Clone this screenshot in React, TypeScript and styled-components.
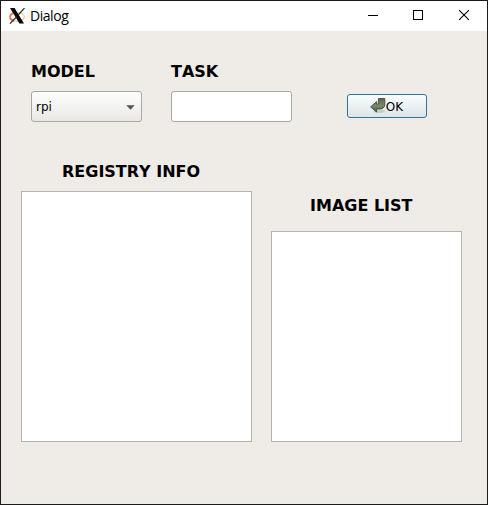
import React from "react";
import styled, { createGlobalStyle } from "styled-components";

const GlobalStyle = createGlobalStyle`
  *, *::before, *::after { box-sizing: border-box; }
  body { margin: 0; background: #1c1b1c; }
`;

const Window = styled.div`
  width: 488px;
  height: 505px;
  display: flex;
  flex-direction: column;
  border: 1px solid #1c1a1b;
  background: #efebe7;
  color: #000;
  font-family: "DejaVu Sans", sans-serif;
  overflow: hidden;
`;

const TitleBar = styled.header`
  height: 30px;
  flex: none;
  display: flex;
  align-items: center;
  padding-left: 8px;
  background: #fff;
`;

const TitleText = styled.span`
  flex: 1;
  margin-left: 4px;
  font: 14px/20px "Open Sans", sans-serif;
  letter-spacing: -0.45px;
`;

const WindowButton = styled.button<{ $width: number }>`
  width: ${(p) => p.$width}px;
  height: 30px;
  padding: 0 0 2px;
  border: 0;
  background: transparent;
  display: flex;
  align-items: center;
  justify-content: center;
`;

const Body = styled.main`
  flex: 1;
  display: flex;
  flex-direction: column;
  padding: 30px 0 0 20px;
`;

const FormRow = styled.div`
  display: flex;
  align-items: flex-end;
  height: 61px;
  padding-left: 10px;
`;

const Field = styled.label<{ $width: number; $gap: number }>`
  width: ${(p) => p.$width}px;
  margin-right: ${(p) => p.$gap}px;
  display: flex;
  flex-direction: column;
`;

const Heading = styled.span`
  height: 20px;
  margin-bottom: 9px;
  font-size: 16px;
  font-weight: bold;
  font-kerning: none;
  line-height: 20px;
  white-space: nowrap;
`;

const Combo = styled.div`
  height: 31px;
  display: flex;
  align-items: center;
  justify-content: space-between;
  padding: 0 6px 0 4px;
  border: 1px solid #aaa7a4;
  border-radius: 3px;
  background: linear-gradient(#fefefe, #eae8e6);
  font-size: 12px;
`;

const ComboArrow = styled.svg`
  margin-top: 1px;
`;

const TextInput = styled.input`
  height: 31px;
  width: 100%;
  padding: 0 4px;
  border: 1px solid #aaa7a4;
  border-radius: 3px;
  background: #fff;
  outline: none;
  font: 12px "DejaVu Sans", sans-serif;
`;

const OkButton = styled.button`
  width: 80px;
  height: 24px;
  margin: 0 0 4px;
  padding: 0;
  display: flex;
  align-items: center;
  justify-content: center;
  border: 1px solid #2d739f;
  border-radius: 3px;
  background: linear-gradient(#fafcfc, #dce6e7);
  color: #000;
  font: 12px "DejaVu Sans", sans-serif;
`;

const OkText = styled.span`
  padding-top: 1px;
  padding-right: 1px;
`;

const Lists = styled.div`
  display: flex;
  align-items: flex-end;
  gap: 19px;
  margin-top: 40px;
`;

const Panel = styled.section<{ $width: number; $indent: number }>`
  width: ${(p) => p.$width}px;
  display: flex;
  flex-direction: column;
  & > ${Heading} { margin-left: ${(p) => p.$indent}px; }
`;

const ListBox = styled.div<{ $height: number }>`
  height: ${(p) => p.$height}px;
  border: 1px solid #b5b2af;
  background: #fff;
`;

const PanelHeading = styled(Heading)<{ $space: number }>`
  margin-bottom: ${(p) => p.$space}px;
`;

const XLogo = () => (
  <svg width="17" height="16" viewBox="0 0 17 16">
    <ellipse cx="8.2" cy="9" rx="7.1" ry="4.3" fill="none" stroke="#f8cfa4" strokeWidth="1.5" />
    <path d="M4 5C-.3 7.2 .2 11.7 5 12.9" fill="none" stroke="#ec7443" strokeWidth="1.6" />
    <path d="M1 0h4.6l9.4 15.5h-4.6z" fill="#080808" />
    <path d="M15.5 0 9.2 7M7.4 9 1 15.7" stroke="#333" strokeWidth="1.2" />
  </svg>
);

const ReturnIcon = () => (
  <svg width="16" height="16" viewBox="0 0 16 16">
    <defs>
      <linearGradient id="arrow" x2="0" y2="1">
        <stop stopColor="#5b6852" />
        <stop offset=".55" stopColor="#7b8a6b" />
        <stop offset="1" stopColor="#485743" />
      </linearGradient>
    </defs>
    <ellipse cx="9.5" cy="13.4" rx="6" ry="1.7" fill="#c3cac9" />
    <path
      d="M8.4 .6h6.4v5.8c0 2.9-2 4.6-5 4.6H6.6v3L.6 8.9l6-5.2v2.5h1c.6 0 .8-.3 .8-1z"
      fill="url(#arrow)"
      stroke="#3c4a38"
      strokeWidth=".9"
      strokeLinejoin="round"
    />
  </svg>
);

export default function App() {
  return (
    <>
      <GlobalStyle />
      <Window>
        <TitleBar>
          <XLogo />
          <TitleText>Dialog</TitleText>
          <WindowButton $width={44} aria-label="Minimize">
            <svg width="10" height="10" shapeRendering="crispEdges">
              <path d="M0 5h10v1H0z" />
            </svg>
          </WindowButton>
          <WindowButton $width={46} aria-label="Maximize">
            <svg width="10" height="10" shapeRendering="crispEdges">
              <path d="M.5 .5h9v9h-9z" fill="none" stroke="#000" />
            </svg>
          </WindowButton>
          <WindowButton $width={46} aria-label="Close">
            <svg width="10" height="10">
              <path d="M0 0l10 10M10 0 0 10" stroke="#000" strokeWidth="1.1" />
            </svg>
          </WindowButton>
        </TitleBar>
        <Body>
          <FormRow>
            <Field as="div" $width={111} $gap={29}>
              <Heading>MODEL</Heading>
              <Combo>
                <span>rpi</span>
                <ComboArrow width="9" height="5">
                  <path d="M.3 .2h8.4L4.5 4.7z" fill="#555" />
                </ComboArrow>
              </Combo>
            </Field>
            <Field $width={121} $gap={55}>
              <Heading>TASK</Heading>
              <TextInput />
            </Field>
            <OkButton>
              <ReturnIcon />
              <OkText>OK</OkText>
            </OkButton>
          </FormRow>
          <Lists>
            <Panel $width={231} $indent={41}>
              <PanelHeading $space={9}>REGISTRY INFO</PanelHeading>
              <ListBox $height={251} />
            </Panel>
            <Panel $width={191} $indent={39}>
              <PanelHeading $space={15}>IMAGE LIST</PanelHeading>
              <ListBox $height={211} />
            </Panel>
          </Lists>
        </Body>
      </Window>
    </>
  );
}
